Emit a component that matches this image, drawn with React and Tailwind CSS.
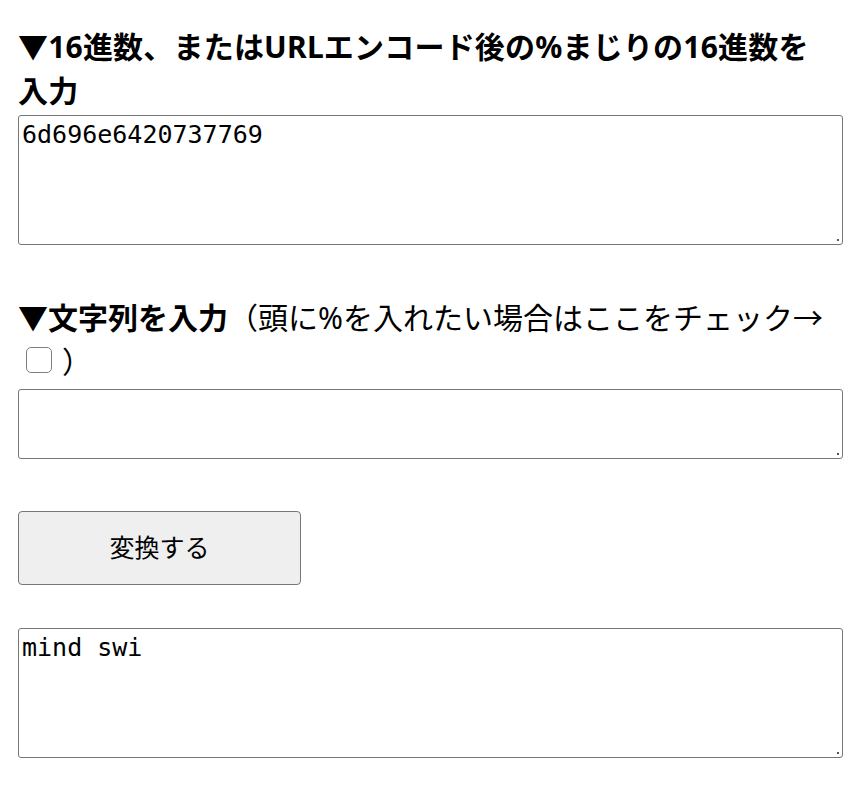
import React from "react";

function Area({ h, value }) {
  return (
    <div className="relative w-[825px]">
      <textarea
        readOnly
        value={value}
        className={`block w-[825px] ${h} resize-none border border-[#767676] rounded-[3px] bg-white px-[3px] py-[4px] font-['DejaVu_Sans_Mono',monospace] text-[25px] leading-[29px] text-black outline-none`}
      />
      <span className="absolute right-[4px] bottom-[4px] w-[2px] h-[2px] bg-[#555]" />
    </div>
  );
}

export default function App() {
  return (
    <div className="min-h-[785px] w-[860px] bg-white px-[18px] pt-[25px] text-black font-['Noto_Sans','Noto_Sans_CJK_JP',sans-serif]">
      <h2 className="text-[30px] leading-[44px] font-bold mb-[2px] tracking-[0.2px]">
        ▼16進数、またはURLエンコード後の%まじりの16進数を<span className="whitespace-nowrap">入力</span>
      </h2>
      <Area h="h-[130px]" value="6d696e6420737769" />

      <div className="mt-[51px] text-[30px] leading-[44px]">
        <span className="font-bold">▼文字列を入力</span>
        <span>（頭に%を入れたい場合はここをチェック→</span>
        <input
          type="checkbox"
          className="appearance-none inline-block align-middle w-[26px] h-[26px] ml-[8px] mr-[10px] mt-[-10px] border-[1.5px] border-[#808080] rounded-[5px] bg-white"
        />
        <span>）</span>
      </div>
      <div className="mt-[5px]">
        <Area h="h-[70px]" value="" />
      </div>

      <button className="mt-[52px] block w-[283px] h-[74px] bg-[#efefef] border border-[#767676] rounded-[4px] text-[25px] text-black">
        変換する
      </button>

      <div className="mt-[43px]">
        <Area h="h-[130px]" value="mind swi" />
      </div>
    </div>
  );
}
